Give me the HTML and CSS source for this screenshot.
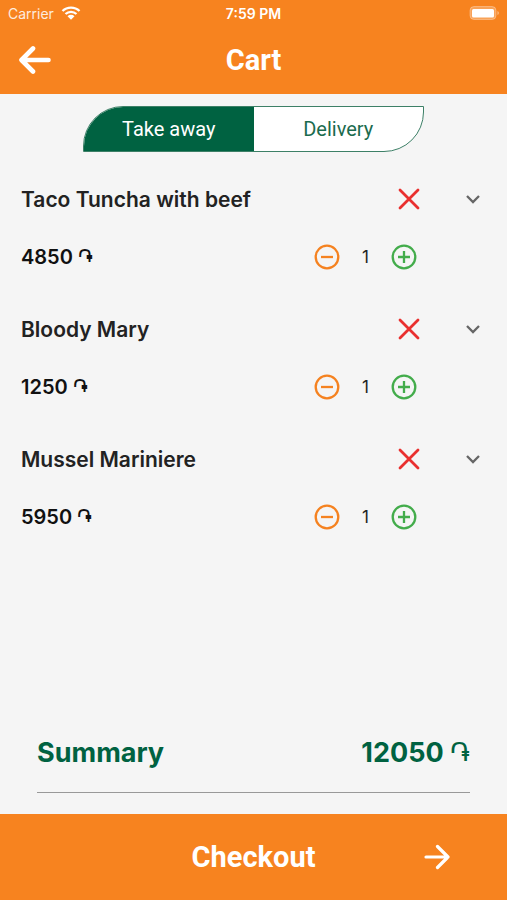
FILE: index.html
```html
<!DOCTYPE html>
<html lang="en">
<head>
<meta charset="utf-8">
<meta name="viewport" content="width=device-width, initial-scale=1">
<title>Cart</title>
<link rel="stylesheet" href="styles.css">
</head>
<body>
<svg class="sprite" aria-hidden="true">
  <symbol id="remove" viewBox="0 0 24 24"><path d="M3 3 21 21M21 3 3 21" fill="none" stroke="currentColor" stroke-width="2.8" stroke-linecap="round"/></symbol>
  <symbol id="chevron" viewBox="0 0 16 16"><path d="m2 5 6 6 6-6" fill="none" stroke="currentColor" stroke-width="2.3"/></symbol>
  <symbol id="minus" viewBox="0 0 26 26"><circle cx="13" cy="13" r="11.3" fill="none" stroke="currentColor" stroke-width="2.3"/><path d="M7 13h12" stroke="currentColor" stroke-width="2.3"/></symbol>
  <symbol id="plus" viewBox="0 0 26 26"><circle cx="13" cy="13" r="11.3" fill="none" stroke="currentColor" stroke-width="2.3"/><path d="M7 13h12M13 7v12" stroke="currentColor" stroke-width="2.3"/></symbol>
</svg>
<div class="app">
  <header class="top">
    <div class="status">
      <div class="carrier">
        <span>Carrier</span>
        <svg width="20" height="14" viewBox="0 0 20 14" aria-hidden="true">
          <path d="M1.5 5a12.2 12.2 0 0 1 17 0M4.500 8a8 8 0 0 1 11 0" fill="none" stroke="currentColor" stroke-width="2.300"/>
          <path d="M6.500 10.300a5 5 0 0 1 7 0L10 13.800z" fill="currentColor"/>
        </svg>
      </div>
      <time class="clock">7:59 PM</time>
      <svg class="battery" width="31" height="16" viewBox="0 0 31 16" aria-hidden="true">
        <rect x="2" y="1.500" width="26" height="13" rx="4" fill="#fff" fill-opacity=".25" stroke="#fff" stroke-opacity=".3" stroke-width="1"/>
        <rect x="4" y="4" width="22" height="8.500" rx="1.500" fill="#fff"/>
        <path d="M29.500 6v4q1.300-.6 1.300-2t-1.300-2" fill="#fff" fill-opacity=".5"/>
      </svg>
    </div>
    <div class="titlebar">
      <button class="icon-button back" type="button" aria-label="Back">
        <svg width="32" height="28" viewBox="0 0 32 28"><path d="M29.500 14H3M14 2.500 2.500 14 14 25.500" fill="none" stroke="currentColor" stroke-width="4.600" stroke-linecap="round" stroke-linejoin="round"/></svg>
      </button>
      <h1>Cart</h1>
    </div>
  </header>

  <main>
    <div class="modes">
      <button class="mode selected" type="button" aria-pressed="true">Take away</button>
      <button class="mode" type="button" aria-pressed="false">Delivery</button>
    </div>

    <ul class="items">
      <li class="item">
        <div class="row">
          <h2>Taco Tuncha with beef</h2>
          <button class="icon-button remove" type="button" aria-label="Remove Taco Tuncha with beef"><svg width="24" height="24"><use href="#remove"/></svg></button>
          <button class="icon-button expand" type="button" aria-label="Show details"><svg width="16" height="16"><use href="#chevron"/></svg></button>
        </div>
        <div class="row">
          <span class="price">4850 <span class="dram">֏</span></span>
          <div class="stepper">
            <button class="icon-button minus" type="button" aria-label="Decrease"><svg width="26" height="26"><use href="#minus"/></svg></button>
            <span class="count">1</span>
            <button class="icon-button plus" type="button" aria-label="Increase"><svg width="26" height="26"><use href="#plus"/></svg></button>
          </div>
        </div>
      </li>
      <li class="item">
        <div class="row">
          <h2>Bloody Mary</h2>
          <button class="icon-button remove" type="button" aria-label="Remove Bloody Mary"><svg width="24" height="24"><use href="#remove"/></svg></button>
          <button class="icon-button expand" type="button" aria-label="Show details"><svg width="16" height="16"><use href="#chevron"/></svg></button>
        </div>
        <div class="row">
          <span class="price">1250 <span class="dram">֏</span></span>
          <div class="stepper">
            <button class="icon-button minus" type="button" aria-label="Decrease"><svg width="26" height="26"><use href="#minus"/></svg></button>
            <span class="count">1</span>
            <button class="icon-button plus" type="button" aria-label="Increase"><svg width="26" height="26"><use href="#plus"/></svg></button>
          </div>
        </div>
      </li>
      <li class="item">
        <div class="row">
          <h2>Mussel Mariniere</h2>
          <button class="icon-button remove" type="button" aria-label="Remove Mussel Mariniere"><svg width="24" height="24"><use href="#remove"/></svg></button>
          <button class="icon-button expand" type="button" aria-label="Show details"><svg width="16" height="16"><use href="#chevron"/></svg></button>
        </div>
        <div class="row">
          <span class="price">5950 <span class="dram">֏</span></span>
          <div class="stepper">
            <button class="icon-button minus" type="button" aria-label="Decrease"><svg width="26" height="26"><use href="#minus"/></svg></button>
            <span class="count">1</span>
            <button class="icon-button plus" type="button" aria-label="Increase"><svg width="26" height="26"><use href="#plus"/></svg></button>
          </div>
        </div>
      </li>
    </ul>

    <div class="summary">
      <span>Summary</span>
      <span>12050 <span class="dram">֏</span></span>
    </div>
  </main>

  <button class="checkout" type="button">
    <span class="checkout-label">Checkout</span>
    <svg width="26" height="26" viewBox="0 0 26 26" aria-hidden="true"><path d="M2 13h22M13.500 2.500 24 13 13.500 23.500" fill="none" stroke="currentColor" stroke-width="3.200" stroke-linecap="round" stroke-linejoin="round"/></svg>
  </button>
</div>
</body>
</html>
```

FILE: styles.css
```css
* {
  box-sizing: border-box;
}

body {
  margin: 0;
  background: #f5f5f5;
  color: #222;
  font-family: Inter, "Noto Sans", "DejaVu Sans", sans-serif;
}

button {
  margin: 0;
  padding: 0;
  border: 0;
  background: none;
  font: inherit;
  cursor: pointer;
}

svg {
  display: block;
}

.sprite {
  display: none;
}

.app {
  display: flex;
  flex-direction: column;
  min-height: 100vh;
}

.top {
  background: #f7831f;
  color: #fff;
}

.status {
  display: grid;
  grid-template-columns: 1fr auto 1fr;
  align-items: center;
  height: 26px;
  padding: 0 8px;
  font-size: 14px;
}

.carrier {
  display: flex;
  align-items: center;
  gap: 7px;
}

.carrier span {
  opacity: 0.85;
}

.clock {
  font-size: 14px;
  font-weight: 600;
}

.battery {
  justify-self: end;
}

.titlebar {
  display: grid;
  grid-template-columns: 1fr auto 1fr;
  align-items: center;
  height: 68px;
  padding: 0 19px;
}

.titlebar h1 {
  margin: 0;
  font: 700 29px/34px Roboto, sans-serif;
}

.icon-button {
  display: flex;
  align-items: center;
  justify-content: center;
}

.back {
  justify-self: start;
  color: #fff;
}

main {
  display: flex;
  flex: 1;
  flex-direction: column;
}

.modes {
  display: flex;
  width: calc(100% - 166px);
  height: 46px;
  margin: 12px auto 18px;
  overflow: hidden;
  border: 1px solid #3d8067;
  border-radius: 40px 0;
  background: #fff;
}

.mode {
  flex: 1;
  color: #1b6b4e;
  font: 400 20px/24px Roboto, sans-serif;
}

.mode.selected {
  background: #006241;
  color: #fff;
}

.items {
  margin: 0;
  padding: 0 20px 0 21px;
  list-style: none;
}

.item {
  height: 130px;
}

.row {
  display: flex;
  align-items: center;
  height: 58px;
}

.row h2 {
  flex: 1;
  margin: 0;
  font-size: 21px;
  font-weight: 600;
}

.remove {
  width: 30px;
  color: #e9302f;
}

.expand {
  width: 16px;
  margin: 0 6px 0 41px;
  color: #666;
}

.price {
  flex: 1;
  color: #111;
  font-size: 20px;
  font-weight: 600;
}

.dram {
  font-family: "DejaVu Sans", sans-serif;
  font-weight: 400;
}

.stepper {
  display: grid;
  grid-template-columns: 26px 51px 26px;
  align-items: center;
  margin-right: 70px;
}

.count {
  font-size: 17px;
  text-align: center;
}

.minus {
  color: #f58220;
}

.plus {
  color: #43ac4b;
}

.summary {
  display: flex;
  align-items: center;
  justify-content: space-between;
  height: 80px;
  margin: auto 37px 21px;
  border-bottom: 1px solid #999;
  color: #006241;
  font-size: 27px;
  font-weight: 700;
}

.checkout {
  display: grid;
  grid-template-columns: 1fr auto 1fr;
  align-items: center;
  height: 86px;
  padding: 0 57px;
  background: #f7831f;
  color: #fff;
}

.checkout-label {
  grid-column: 2;
  font: 700 29px/34px Roboto, sans-serif;
}

.checkout svg {
  justify-self: end;
}
```
